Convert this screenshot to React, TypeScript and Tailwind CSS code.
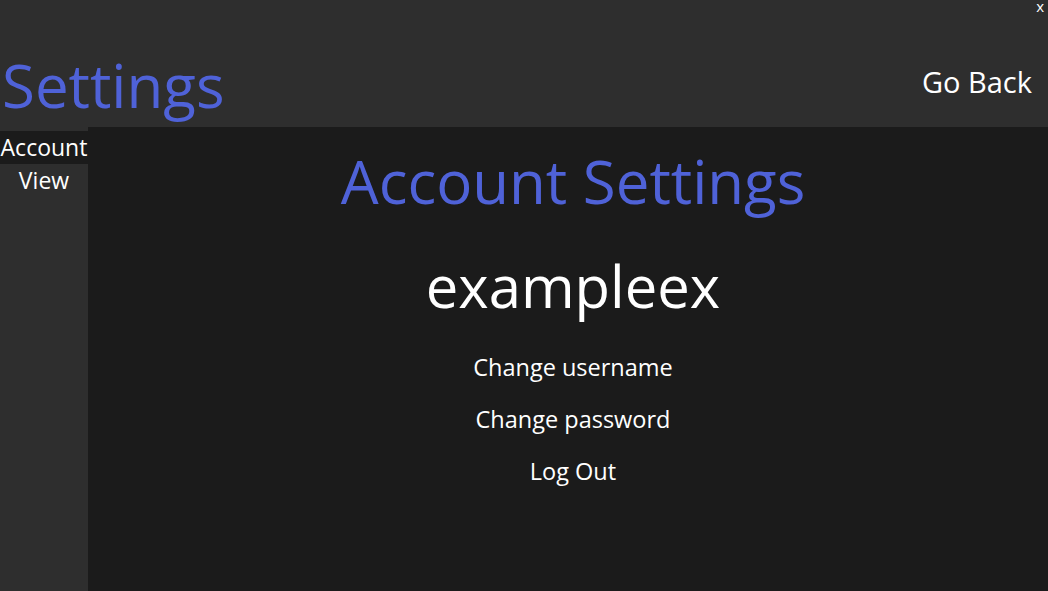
import React from "react";

const font = { fontFamily: '"Open Sans", "Noto Sans", sans-serif' };

function SideItem({ label, active }: { label: string; active?: boolean }) {
  return (
    <button
      className={`w-full text-center text-[23px] leading-[33px] text-white ${active ? "bg-[#1b1b1b]" : ""}`}
    >
      {label}
    </button>
  );
}

export default function App() {
  return (
    <div
      className="w-[1048px] h-[591px] flex flex-col bg-[#1b1b1b] overflow-hidden relative"
      style={font}
    >
      <button className="absolute top-0 right-[4px] text-[15px] text-white leading-[12px]">
        x
      </button>
      <header className="h-[127px] shrink-0 bg-[#2e2e2e] flex items-end justify-between pl-[2px] pr-[16px]">
        <h1 className="text-[60px] leading-none text-[#4f62d8] pb-[12px]">
          Settings
        </h1>
        <button className="text-[29px] leading-none text-white pb-[31px]">
          Go Back
        </button>
      </header>
      <div className="flex flex-1">
        <aside className="w-[88px] shrink-0 bg-[#2e2e2e] pt-[4px]">
          <SideItem label="Account" active />
          <SideItem label="View" />
        </aside>
        <main className="flex-1 flex flex-col items-center pl-[10px] pt-[14px]">
          <h2 className="text-[60px] leading-[80px] text-[#4f62d8]">
            Account Settings
          </h2>
          <p className="text-[58px] leading-[80px] text-white mt-[25px]">
            exampleex
          </p>
          <div className="flex flex-col items-center mt-[16px] text-[23.5px] text-white">
            <button className="h-[52px]">Change username</button>
            <button className="h-[52px]">Change password</button>
            <button className="h-[52px]">Log Out</button>
          </div>
        </main>
      </div>
    </div>
  );
}
